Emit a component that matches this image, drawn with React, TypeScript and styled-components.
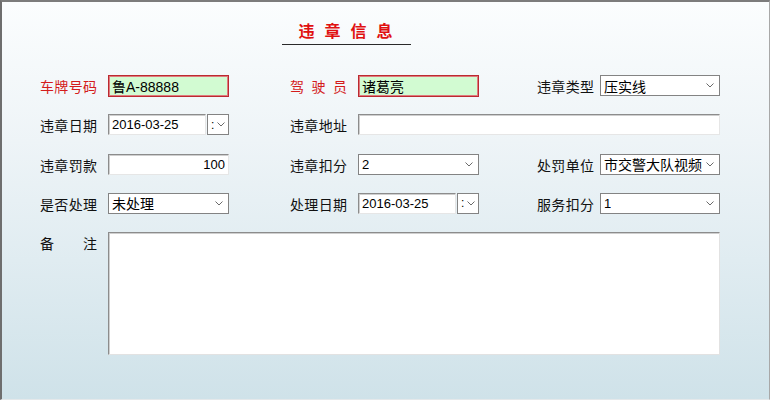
import React from "react";
import styled, { createGlobalStyle } from "styled-components";

const GlobalStyle = createGlobalStyle`
  body {
    margin: 0;
    font-family: "Noto Sans CJK SC", "Liberation Sans", sans-serif;
  }
`;

const Window = styled.div`
  box-sizing: border-box;
  width: 770px;
  height: 400px;
  border-top: 2px solid #7c7c7c;
  border-left: 2px solid #6e6e6e;
  border-right: 1px solid #a8a8a8;
  border-bottom: 1px solid #e4e8ea;
  background: linear-gradient(180deg, #fbfdfe 0%, #eef4f7 35%, #e0ecf1 65%, #cfe2e9 100%);
  overflow: hidden;
`;

const TitleWrap = styled.div`
  box-sizing: border-box;
  width: 129px;
  margin-left: 280px;
  padding: 18px 0 3px 8px;
  border-bottom: 1px solid #2a2a2a;
  text-align: center;
`;

const Title = styled.h1`
  margin: 0;
  font-size: 16px;
  line-height: 21px;
  font-weight: 700;
  letter-spacing: 10px;
  color: #e01010;
`;

const Form = styled.div`
  display: grid;
  grid-template-columns: 68px 121px 61px 68px 121px 58px 63px 120px;
  grid-template-rows: 22px 22px 22px 22px 123px;
  row-gap: 17.3px;
  align-items: start;
  margin-top: 30px;
  padding-left: 38px;
`;

const LabelBox = styled.div<{ $red?: boolean }>`
  display: flex;
  justify-content: space-between;
  width: 57px;
  height: 22px;
  align-items: center;
  font-size: 14px;
  color: ${(p) => (p.$red ? "#d41c1c" : "#111")};
`;

const Label = ({ text, red }: { text: string; red?: boolean }) => (
  <LabelBox $red={red}>
    {text.split("").map((c, i) => (
      <span key={i}>{c}</span>
    ))}
  </LabelBox>
);

const Cell = styled.div<{ $span?: number }>`
  grid-column: span ${(p) => p.$span || 1};
`;

const TextBox = styled.input<{ $required?: boolean; $right?: boolean }>`
  box-sizing: border-box;
  display: block;
  width: 100%;
  height: ${(p) => (p.$required ? "22px" : "21px")};
  margin: 0;
  padding: 0 3px;
  font-family: "Liberation Sans", "Noto Sans CJK SC", sans-serif;
  font-size: ${(p) => (p.$required ? "14px" : "13px")};
  color: #000;
  text-align: ${(p) => (p.$right ? "right" : "left")};
  outline: none;
  background: ${(p) => (p.$required ? "#d2fbd2" : "#fff")};
  border: 1px solid;
  border-color: ${(p) =>
    p.$required ? "#bb2a30" : "#8c8c8c #e6e6e6 #e6e6e6 #8c8c8c"};
  box-shadow: ${(p) =>
    p.$required ? "inset 0 0 0 1px #e07a7e" : "inset 1px 1px 0 #cfcfcf"};
`;

const SelectBox = styled.div`
  box-sizing: border-box;
  display: flex;
  align-items: center;
  justify-content: space-between;
  gap: 2px;
  height: 21px;
  padding: 0 5px 0 3px;
  background: #fff;
  border: 1px solid #838383;
  font-size: 14px;
  color: #000;
  white-space: nowrap;
  overflow: hidden;
`;

const SelectValue = styled.span<{ $latin?: boolean }>`
  font-family: ${(p) =>
    p.$latin ? '"Liberation Sans", sans-serif' : '"Noto Sans CJK SC", sans-serif'};
  font-size: ${(p) => (p.$latin ? "13px" : "14px")};
  overflow: hidden;
`;

const Chevron = () => (
  <svg width="8" height="5" viewBox="0 0 8 5" style={{ flexShrink: 0 }}>
    <polyline points="0.5,0.5 4,4 7.5,0.5" fill="none" stroke="#6a6a6a" strokeWidth="1" />
  </svg>
);

const Select = ({ value, latin }: { value: string; latin?: boolean }) => (
  <SelectBox>
    <SelectValue $latin={latin}>{value}</SelectValue>
    <Chevron />
  </SelectBox>
);

const DateRow = styled.div`
  display: flex;
  gap: 1px;
`;

const SpinButton = styled.div`
  box-sizing: border-box;
  display: flex;
  align-items: center;
  gap: 3px;
  flex: 0 0 22px;
  height: 21px;
  padding-left: 3px;
  background: #fff;
  border: 1px solid #838383;
  font-family: "Liberation Sans", sans-serif;
  font-size: 12px;
  color: #000;
`;

const DateField = ({ value }: { value: string }) => (
  <DateRow>
    <TextBox readOnly value={value} style={{ width: 98 }} />
    <SpinButton>
      <span>:</span>
      <Chevron />
    </SpinButton>
  </DateRow>
);

const Memo = styled.textarea`
  box-sizing: border-box;
  display: block;
  width: 100%;
  height: 123px;
  margin: 0;
  resize: none;
  outline: none;
  background: #fff;
  border: 1px solid;
  border-color: #8c8c8c #e2e2e2 #e2e2e2 #8c8c8c;
  box-shadow: inset 1px 1px 0 #cfcfcf;
`;

export default function App() {
  return (
    <Window>
      <GlobalStyle />
      <TitleWrap>
        <Title>违章信息</Title>
      </TitleWrap>
      <Form>
        <Label text="车牌号码" red />
        <Cell>
          <TextBox readOnly $required value="鲁A-88888" />
        </Cell>
        <Cell />
        <Label text="驾驶员" red />
        <Cell>
          <TextBox readOnly $required value="诸葛亮" />
        </Cell>
        <Cell />
        <Label text="违章类型" />
        <Cell>
          <Select value="压实线" />
        </Cell>

        <Label text="违章日期" />
        <Cell>
          <DateField value="2016-03-25" />
        </Cell>
        <Cell />
        <Label text="违章地址" />
        <Cell $span={4}>
          <TextBox readOnly value="" />
        </Cell>

        <Label text="违章罚款" />
        <Cell>
          <TextBox readOnly $right value="100" />
        </Cell>
        <Cell />
        <Label text="违章扣分" />
        <Cell>
          <Select value="2" latin />
        </Cell>
        <Cell />
        <Label text="处罚单位" />
        <Cell>
          <Select value="市交警大队视频" />
        </Cell>

        <Label text="是否处理" />
        <Cell>
          <Select value="未处理" />
        </Cell>
        <Cell />
        <Label text="处理日期" />
        <Cell>
          <DateField value="2016-03-25" />
        </Cell>
        <Cell />
        <Label text="服务扣分" />
        <Cell>
          <Select value="1" latin />
        </Cell>

        <Label text="备注" />
        <Cell $span={7}>
          <Memo readOnly />
        </Cell>
      </Form>
    </Window>
  );
}
